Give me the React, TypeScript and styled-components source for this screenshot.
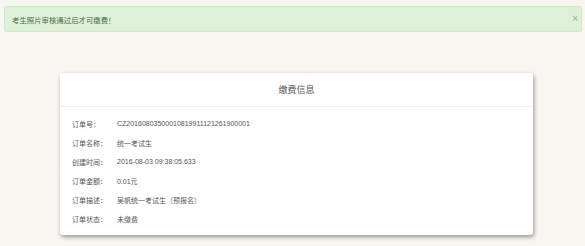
import React from "react";
import styled, { createGlobalStyle } from "styled-components";

const GlobalStyle = createGlobalStyle`
  html, body {
    margin: 0;
    padding: 0;
    background: #f8f6f0;
    font-family: "Liberation Sans", "Noto Sans CJK SC", sans-serif;
  }
`;

const rows: [string, string][] = [
  ["订单号：", "CZ20160803500010819911121261900001"],
  ["订单名称：", "统一考试生"],
  ["创建时间：", "2016-08-03 09:38:05.633"],
  ["订单金额：", "0.01元"],
  ["订单描述：", "吴帆统一考试生（预报名）"],
  ["订单状态：", "未缴费"],
];

const App: React.FC = () => {
  return (
    <Page>
      <GlobalStyle />
      <Alert>
        <AlertText>考生照片审核通过后才可缴费！</AlertText>
        <Close>×</Close>
      </Alert>
      <Card>
        <CardHeader>缴费信息</CardHeader>
        <CardBody>
          {rows.map(([label, value]) => (
            <Row key={label}>
              <Label>{label}</Label>
              <Value>{value}</Value>
            </Row>
          ))}
        </CardBody>
      </Card>
    </Page>
  );
};

export default App;

const Page = styled.div`
  width: 585px;
  height: 246px;
  padding: 6px 3px 0 4px;
  box-sizing: border-box;
`;

const Alert = styled.div`
  height: 26px;
  display: flex;
  align-items: center;
  justify-content: space-between;
  padding: 0 3px 0 7px;
  background: #dff0d8;
  border: 1px solid #d6e9c6;
  border-radius: 2px;
  box-sizing: border-box;
`;

const AlertText = styled.span`
  font-size: 7.4px;
  color: #4a6f46;
`;

const Close = styled.span`
  font-size: 10px;
  font-weight: bold;
  color: #b4bdb2;
  line-height: 1;
`;

const Card = styled.div`
  margin: 41px 0 0 56px;
  width: 473px;
  height: 162px;
  background: #ffffff;
  border-radius: 3px;
  box-shadow: 1px 2px 4px rgba(0, 0, 0, 0.4);
  box-sizing: border-box;
`;

const CardHeader = styled.div`
  height: 34px;
  display: flex;
  align-items: center;
  justify-content: center;
  border-bottom: 1px solid #eeeeee;
  font-size: 9px;
  color: #555555;
  box-sizing: border-box;
`;

const CardBody = styled.div`
  padding: 7px 0 0 12px;
`;

const Row = styled.div`
  display: flex;
  align-items: center;
  height: 19px;
  font-size: 7px;
  color: #555555;
`;

const Label = styled.span`
  width: 45px;
  flex-shrink: 0;
`;

const Value = styled.span``;
